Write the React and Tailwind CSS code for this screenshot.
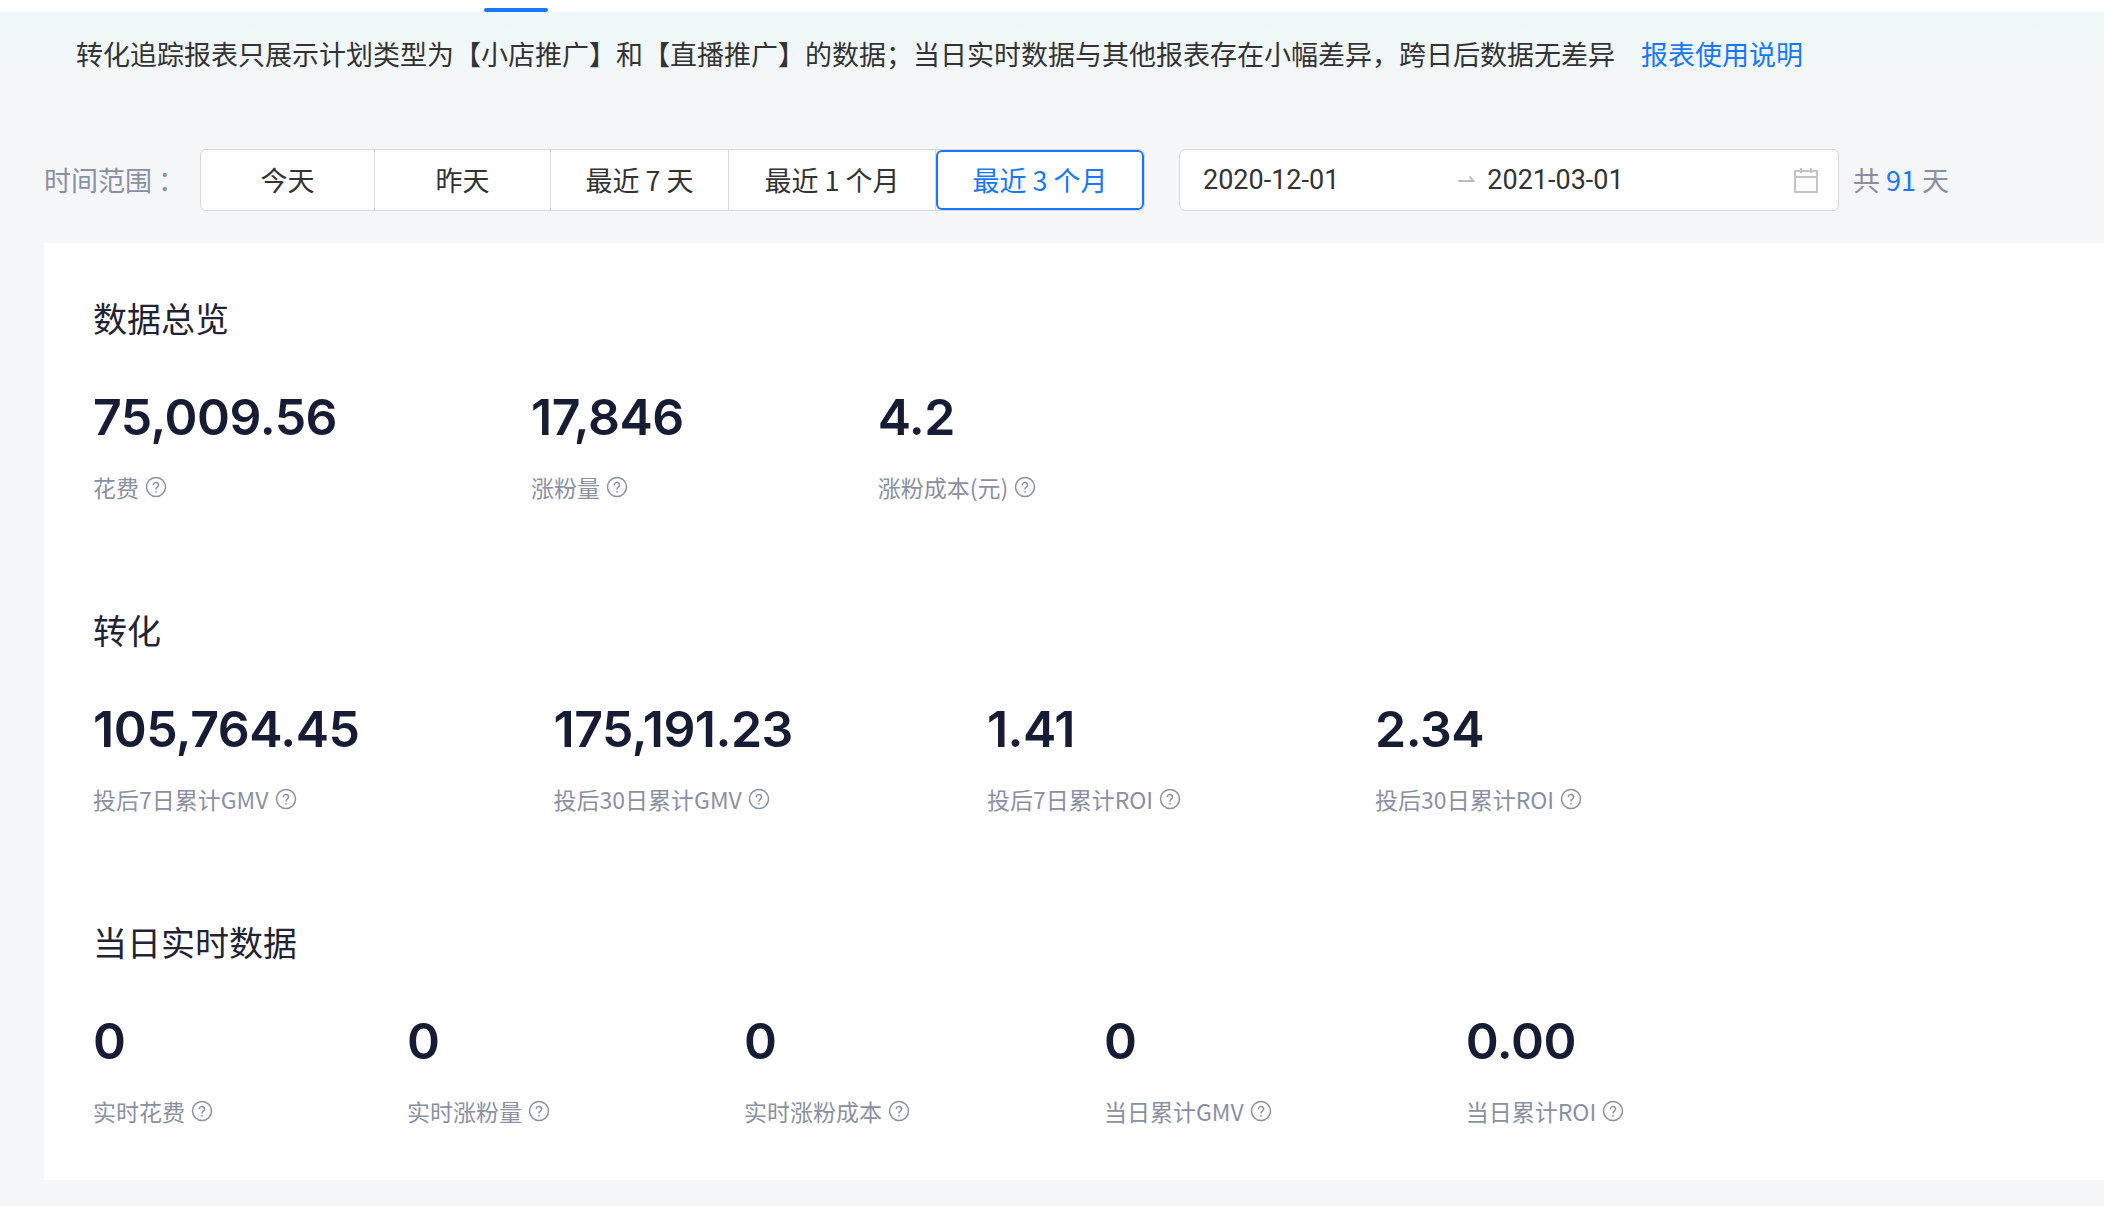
import React from "react";

const F = { fontFamily: '"Noto Sans CJK SC", "Noto Sans", sans-serif' };
const NUM = { fontFamily: 'Inter, "Noto Sans CJK SC", sans-serif' };

function Help() {
  return (
    <svg width="22" height="22" viewBox="0 0 22 22" className="ml-[6px]">
      <circle cx="11" cy="11" r="9.5" fill="none" stroke="#8a90a3" strokeWidth="1.5" />
      <path d="M8.3 8.6a2.7 2.7 0 0 1 5.3.5c0 1.8-2.6 2.2-2.6 4" fill="none" stroke="#8a90a3" strokeWidth="1.5" strokeLinecap="round" />
      <circle cx="11" cy="15.8" r="0.9" fill="#8a90a3" />
    </svg>
  );
}

function Section({ title, items, first }) {
  return (
    <div className={first ? "" : "mt-[102px]"}>
      <div className="h-[48px] flex items-center text-[34px] text-[#1f2333]">{title}</div>
      <div className="flex gap-[194px] mt-[46px]">
        {items.map(([n, l]) => (
          <div key={l} className="flex flex-col">
            <div className="h-[60px] flex items-center text-[50px] font-semibold text-[#161c33] tracking-[-0.5px]" style={NUM}>{n}</div>
            <div className="h-[32px] mt-[24px] flex items-center text-[23px] text-[#8a90a3]">{l}<Help /></div>
          </div>
        ))}
      </div>
    </div>
  );
}

const tabs = ["今天", "昨天", "最近 7 天", "最近 1 个月", "最近 3 个月"];
const widths = ["w-[174px]", "w-[176px]", "w-[178px]", "w-[207px]", "w-[208px]"];

export default function App() {
  return (
    <div className="w-[2104px] h-[1206px] bg-[#f5f6f8] overflow-hidden" style={F}>
      <div className="h-[12px] bg-white relative">
        <div className="absolute left-[484px] top-[8px] w-[64px] h-[4px] rounded bg-[#1677ff]" />
      </div>
      <div className="h-[90px] bg-gradient-to-b from-[#eef8f9] to-[#f5f6f8] flex items-start pt-[22px] pl-[76px] text-[27px] text-[#333]">
        转化追踪报表只展示计划类型为【小店推广】和【直播推广】的数据；当日实时数据与其他报表存在小幅差异，跨日后数据无差异
        <span className="ml-[26px] text-[#1677ff]">报表使用说明</span>
      </div>
      <div className="flex items-center h-[64px] mt-[46px] pl-[44px]">
        <span className="text-[27px] text-[#8a90a3] w-[156px]">时间范围 ：</span>
        <div className="flex h-[62px] rounded-[6px] border border-[#d9d9d9] bg-white overflow-hidden">
          {tabs.map((t, i) => (
            <div key={t} className={`${widths[i]} flex items-center justify-center text-[27px] ${i === 4 ? "text-[#1677ff] border-2 border-[#1677ff] rounded-[6px]" : "text-[#333] border-r border-[#d9d9d9]"}`}>{t}</div>
          ))}
        </div>
        <div className="ml-[34px] w-[660px] h-[62px] rounded-[6px] border border-[#d9d9d9] bg-white flex items-center text-[27px] text-[#333] pl-[23px]" style={{ fontFamily: 'Roboto, "Noto Sans CJK SC", sans-serif' }}>
          <span>2020-12-01</span>
          <span className="ml-[118px] text-[#bbb] text-[22px]">⇀</span>
          <span className="ml-[12px]">2021-03-01</span>
          <svg className="ml-auto mr-[20px]" width="24" height="26" viewBox="0 0 24 26">
            <rect x="1" y="4" width="22" height="21" fill="none" stroke="#c4c4c4" strokeWidth="2" />
            <line x1="1" y1="10" x2="23" y2="10" stroke="#c4c4c4" strokeWidth="2" />
            <line x1="7" y1="1" x2="7" y2="6" stroke="#c4c4c4" strokeWidth="2" />
            <line x1="17" y1="1" x2="17" y2="6" stroke="#c4c4c4" strokeWidth="2" />
          </svg>
        </div>
        <span className="ml-[14px] text-[27px] text-[#8a90a3]">共 <span className="text-[#1677ff]">91</span> 天</span>
      </div>
      <div className="ml-[44px] mt-[31px] bg-white pl-[49px] pt-[50px] pb-[53px]">
        <Section first title="数据总览" items={[["75,009.56", "花费"], ["17,846", "涨粉量"], ["4.2", "涨粉成本(元)"]]} />
        <Section title="转化" items={[["105,764.45", "投后7日累计GMV"], ["175,191.23", "投后30日累计GMV"], ["1.41", "投后7日累计ROI"], ["2.34", "投后30日累计ROI"]]} />
        <Section title="当日实时数据" items={[["0", "实时花费"], ["0", "实时涨粉量"], ["0", "实时涨粉成本"], ["0", "当日累计GMV"], ["0.00", "当日累计ROI"]]} />
      </div>
    </div>
  );
}
